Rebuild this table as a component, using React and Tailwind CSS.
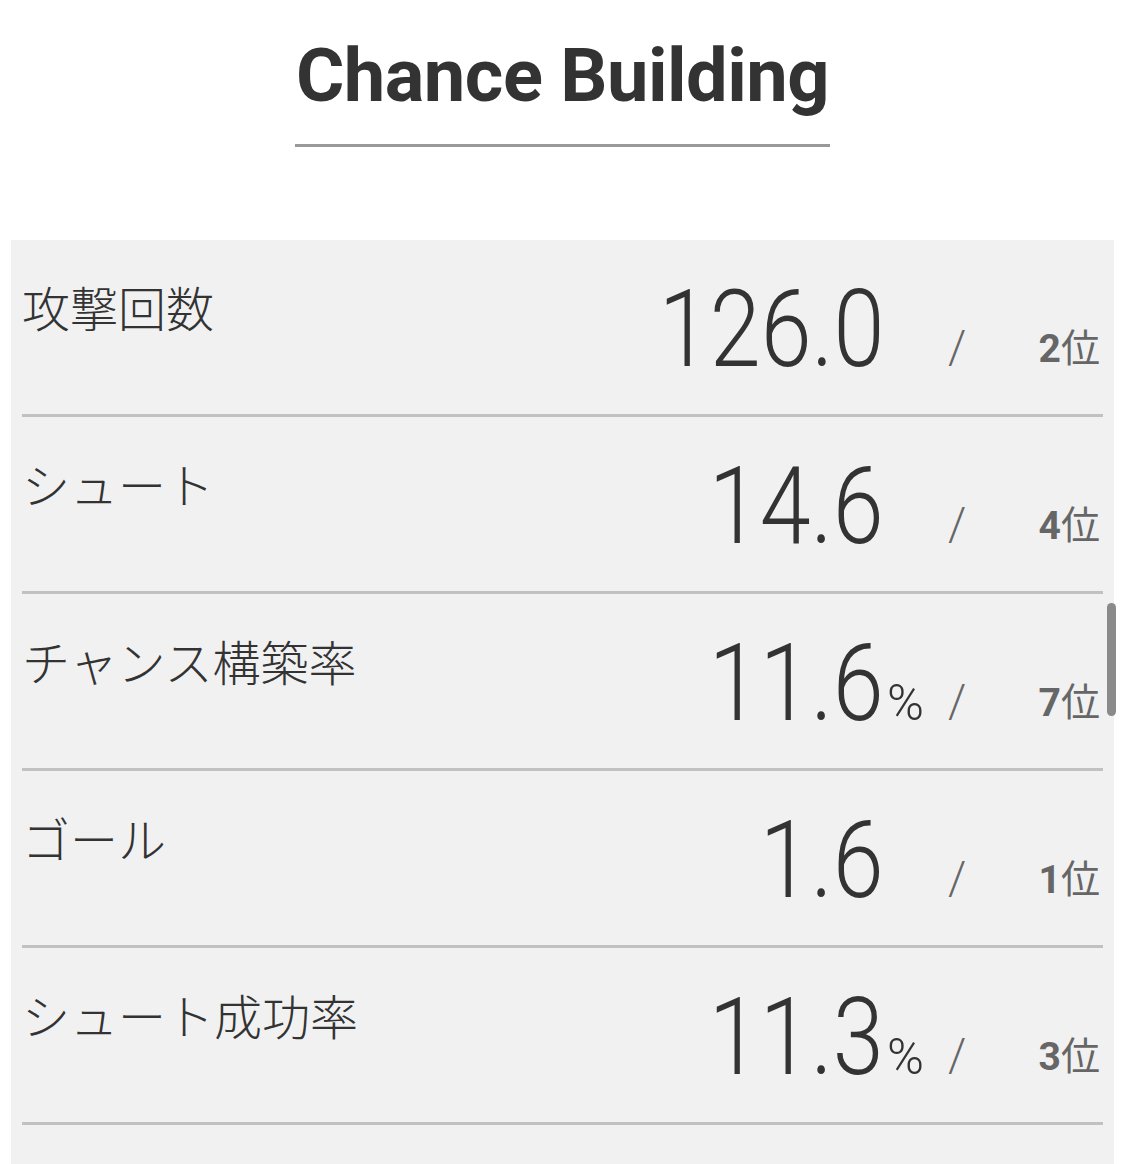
const STATS = [
  { label: "攻撃回数", value: "126.0", pct: false, rank: 2 },
  { label: "シュート", value: "14.6", pct: false, rank: 4 },
  { label: "チャンス構築率", value: "11.6", pct: true, rank: 7 },
  { label: "ゴール", value: "1.6", pct: false, rank: 1 },
  { label: "シュート成功率", value: "11.3", pct: true, rank: 3 },
];

const FONT = "font-['Roboto','Noto_Sans_CJK_JP',sans-serif]";

function StatRow({ stat }) {
  return (
    <div className="flex h-[177px] items-start justify-between border-b-[3px] border-[#c1c1c1] pr-[3px]">
      <p className="pt-[40px] text-[48px] font-light leading-[1.3] text-[#333]">{stat.label}</p>
      <div className="flex items-baseline pt-[35px] leading-none">
        <span className="inline-block origin-right scale-x-[0.85] text-[108px] font-light text-[#333]">
          {stat.value}
        </span>
        <span className="w-[42px] pl-[3px] text-[50px] font-light text-[#333]">
          {stat.pct ? "%" : ""}
        </span>
        <span className="relative -top-[3px] w-[56px] pl-[22px] text-[46px] font-light text-[#666]">/</span>
        <span className="relative -top-[4px] w-[118px] text-right text-[39px] text-[#666]">
          <span className="font-bold">{stat.rank}</span>位
        </span>
      </div>
    </div>
  );
}

export default function App() {
  return (
    <div className={`relative h-[1164px] overflow-hidden bg-white ${FONT}`}>
      <div className="flex justify-center pt-[32px]">
        <h1 className="border-b-[3px] border-[#999] px-[1px] pb-[23px] text-[74px] font-bold leading-[1.2] tracking-[-0.5px] text-[#333]">
          Chance Building
        </h1>
      </div>

      <div className="mx-[11px] mt-[93px] bg-[#f1f1f1] px-[11px] pb-[60px]">
        {STATS.map((s) => (
          <StatRow key={s.label} stat={s} />
        ))}
      </div>

      <div className="absolute left-[1107px] top-[603px] h-[113px] w-[9px] rounded-full bg-[#8a8a8a]" />
    </div>
  );
}
